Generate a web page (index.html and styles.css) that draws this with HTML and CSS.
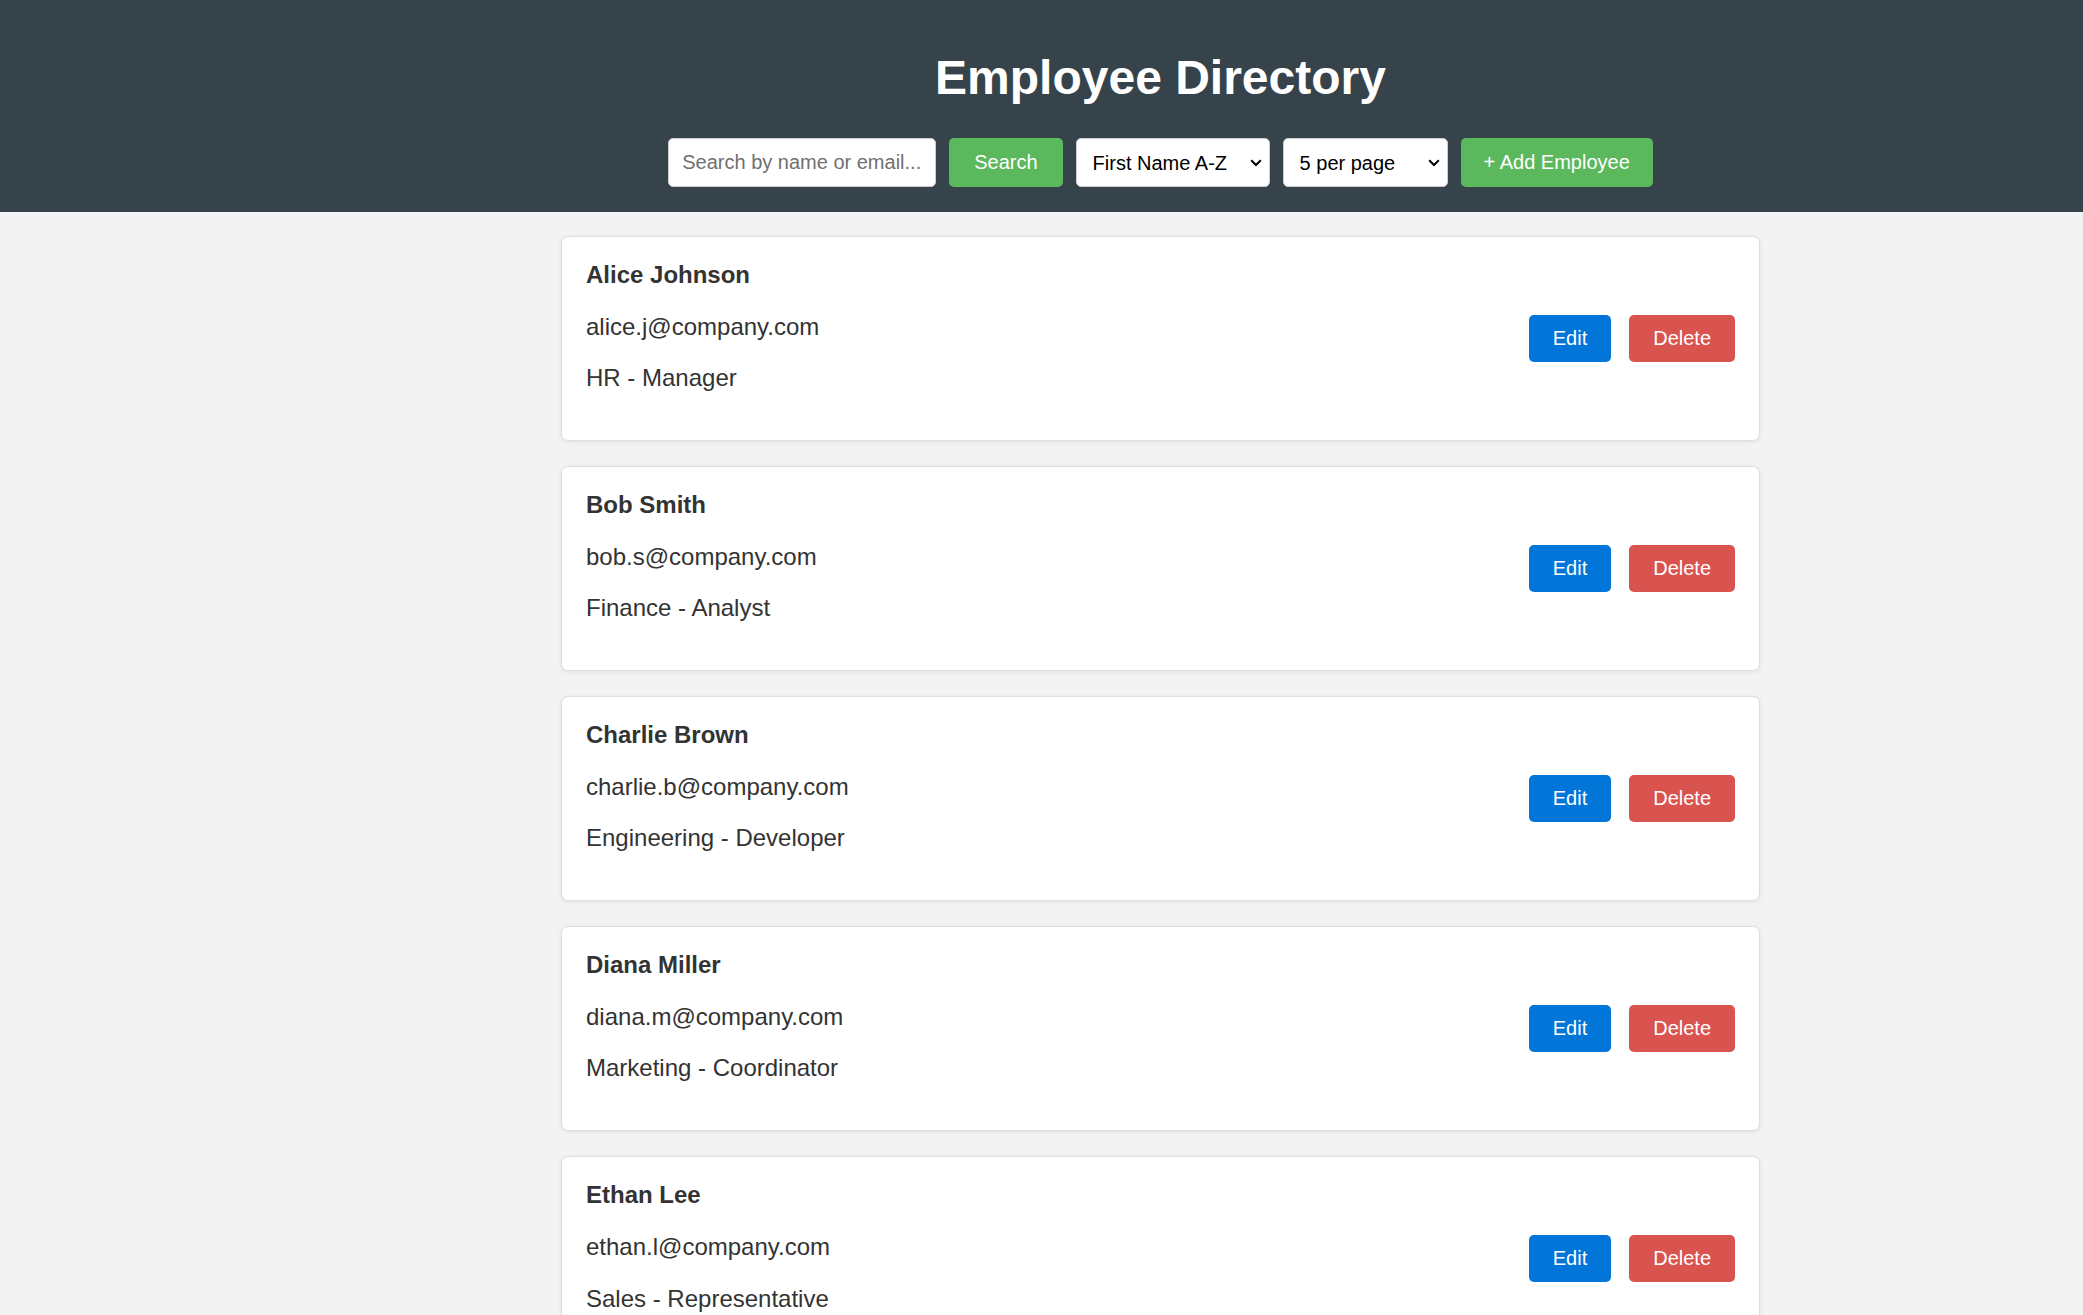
FILE: index.html
```html
<!DOCTYPE html>
<html lang="en">
<head>
<meta charset="utf-8">
<title>Employee Directory</title>
<link rel="stylesheet" href="styles.css">
</head>
<body>
<header class="topbar">
  <h1 class="title">Employee Directory</h1>
  <div class="controls">
    <input class="search-input" type="text" placeholder="Search by name or email...">
    <button class="btn btn-green btn-search">Search</button>
    <select class="select select-sort">
      <option>First Name A-Z</option>
    </select>
    <select class="select select-page">
      <option>5 per page</option>
    </select>
    <button class="btn btn-green btn-add">+ Add Employee</button>
  </div>
</header>
<main class="main">
  <div class="list">
    <div class="card">
      <div class="info">
        <p class="name">Alice Johnson</p>
        <p class="line">alice.j@company.com</p>
        <p class="line">HR - Manager</p>
      </div>
      <div class="actions">
        <button class="btn btn-blue">Edit</button>
        <button class="btn btn-red">Delete</button>
      </div>
    </div>
    <div class="card">
      <div class="info">
        <p class="name">Bob Smith</p>
        <p class="line">bob.s@company.com</p>
        <p class="line">Finance - Analyst</p>
      </div>
      <div class="actions">
        <button class="btn btn-blue">Edit</button>
        <button class="btn btn-red">Delete</button>
      </div>
    </div>
    <div class="card">
      <div class="info">
        <p class="name">Charlie Brown</p>
        <p class="line">charlie.b@company.com</p>
        <p class="line">Engineering - Developer</p>
      </div>
      <div class="actions">
        <button class="btn btn-blue">Edit</button>
        <button class="btn btn-red">Delete</button>
      </div>
    </div>
    <div class="card">
      <div class="info">
        <p class="name">Diana Miller</p>
        <p class="line">diana.m@company.com</p>
        <p class="line">Marketing - Coordinator</p>
      </div>
      <div class="actions">
        <button class="btn btn-blue">Edit</button>
        <button class="btn btn-red">Delete</button>
      </div>
    </div>
    <div class="card">
      <div class="info">
        <p class="name">Ethan Lee</p>
        <p class="line">ethan.l@company.com</p>
        <p class="line">Sales - Representative</p>
      </div>
      <div class="actions">
        <button class="btn btn-blue">Edit</button>
        <button class="btn btn-red">Delete</button>
      </div>
    </div>
  </div>
</main>
</body>
</html>
```
FILE: styles.css
```css
* { box-sizing: border-box; }

body {
  margin: 0;
  background: #f3f3f3;
  font-family: "Liberation Sans", Arial, sans-serif;
  color: #333;
}

.topbar {
  background: #37434b;
  padding: 50px 0 25px 238px;
  display: flex;
  flex-direction: column;
  align-items: center;
}

.title {
  margin: 0 0 33px;
  font-size: 48px;
  font-weight: bold;
  color: #fff;
  line-height: 55px;
}

.controls {
  display: flex;
  gap: 13px;
  align-items: center;
}

.search-input {
  width: 268px;
  height: 49px;
  padding: 0 13px;
  border: 1px solid #ccc;
  border-radius: 5px;
  font-family: inherit;
  font-size: 20px;
  color: #333;
  background: #fff;
}
.search-input::placeholder { color: #707070; }

.select {
  -webkit-appearance: none;
  appearance: none;
  height: 49px;
  padding: 0 24px 0 16px;
  border: 1px solid #ccc;
  border-radius: 5px;
  font-family: inherit;
  font-size: 20px;
  color: #000;
  background-color: #fff;
  background-image: url("data:image/svg+xml,%3Csvg xmlns='http://www.w3.org/2000/svg' width='12' height='8' viewBox='0 0 12 8'%3E%3Cpolyline points='1.2,1.2 6,6 10.8,1.2' fill='none' stroke='%23000' stroke-width='2'/%3E%3C/svg%3E");
  background-repeat: no-repeat;
  background-position: right 7px center;
  background-size: 12px 8px;
}
.select-sort { width: 194px; }
.select-page { width: 165px; }

.btn {
  border: none;
  border-radius: 5px;
  font-family: inherit;
  font-size: 20px;
  color: #fff;
  cursor: pointer;
  line-height: 23px;
}
.btn-green { background: #5cb85c; height: 49px; }
.btn-search { padding: 0 25px; }
.btn-add { padding: 0 23px; }
.btn-blue { background: #0275d8; padding: 12px 24px; }
.btn-red { background: #d9534f; padding: 12px 24px; }

.main {
  padding: 24px 0 40px 238px;
}

.list {
  width: 1199px;
  margin: 0 auto;
  display: flex;
  flex-direction: column;
  gap: 25.3px;
}

.card {
  background: #fff;
  border: 1px solid #dedede;
  border-radius: 7px;
  box-shadow: 0 1px 4px rgba(0, 0, 0, 0.08);
  padding: 24px;
  display: flex;
  justify-content: space-between;
  align-items: center;
}

.info p {
  margin: 0 0 24px;
  font-size: 24px;
  line-height: 27.6px;
  color: #333;
}
.info .name { font-weight: bold; }

.actions {
  display: flex;
  gap: 18px;
}
```
